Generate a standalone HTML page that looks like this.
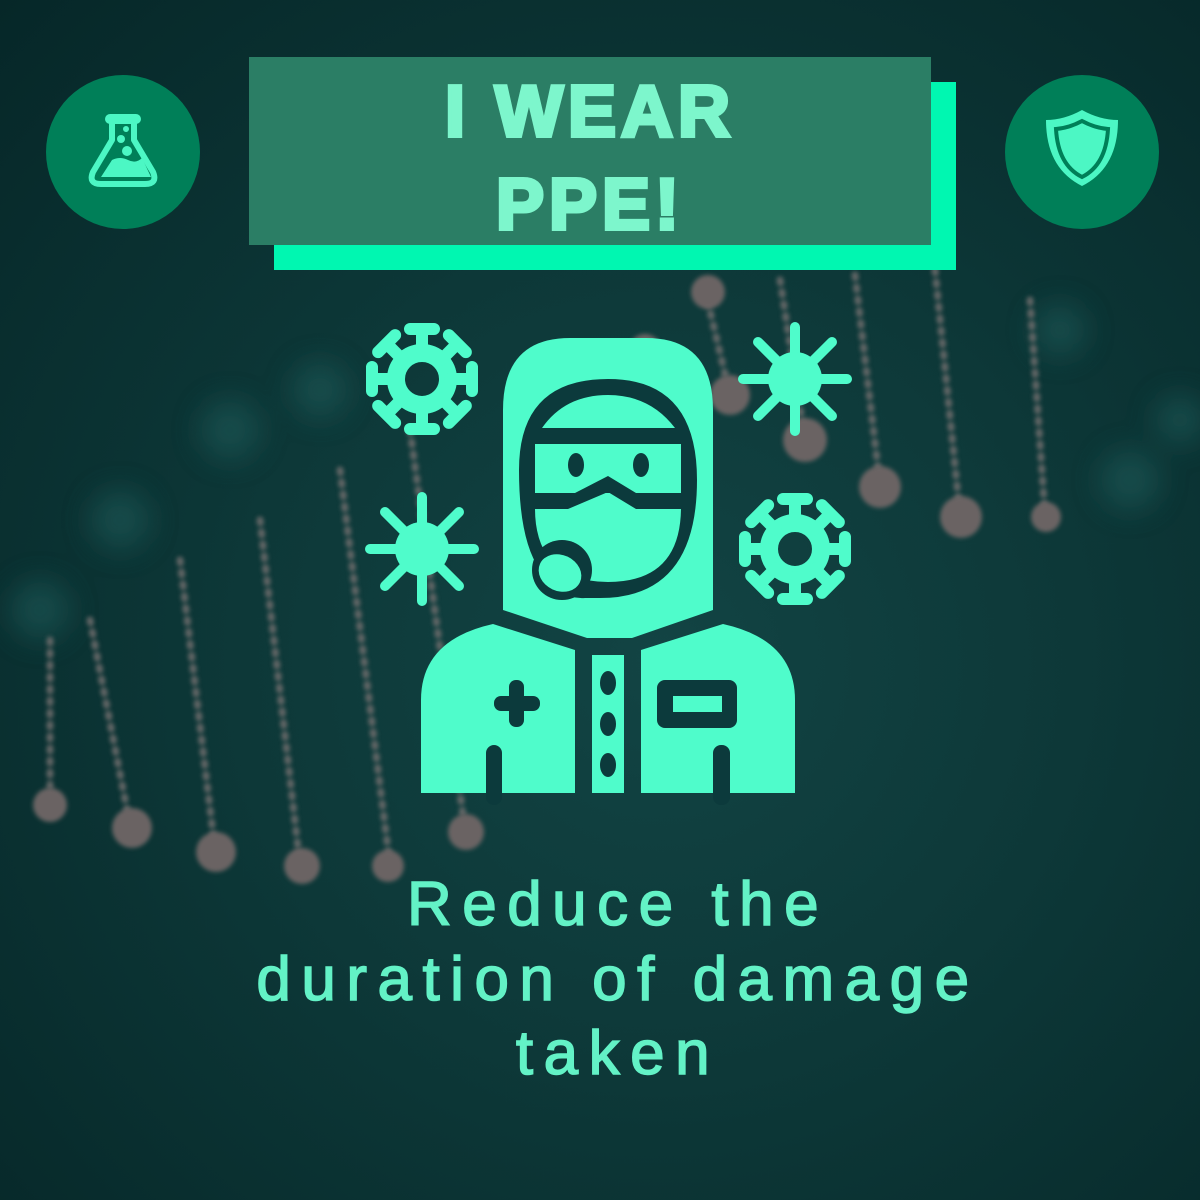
<!DOCTYPE html>
<html><head><style>
html,body{margin:0;padding:0}
body{width:1200px;height:1200px;overflow:hidden;position:relative;font-family:"Liberation Sans",sans-serif;
background:radial-gradient(ellipse at 55% 55%,#124444 0%,#0d3838 45%,#062728 100%);}
.abs{position:absolute}
.t{position:absolute;left:0;width:1236px;text-align:center;color:#63f2c6;font-size:62px;letter-spacing:10.5px;line-height:1;-webkit-text-stroke:1.5px #63f2c6}
</style></head><body>
<svg class="abs" style="left:0;top:0" width="1200" height="1200">
<defs><filter id="b"><feGaussianBlur stdDeviation="2"/></filter><filter id="b2"><feGaussianBlur stdDeviation="14"/></filter></defs>
<g filter="url(#b2)" fill="#1c5a58" opacity=".6">
<circle cx="40" cy="610" r="30"/><circle cx="120" cy="520" r="30"/><circle cx="230" cy="430" r="30"/><circle cx="320" cy="390" r="28"/><circle cx="1130" cy="480" r="30"/><circle cx="1060" cy="330" r="26"/><circle cx="1180" cy="420" r="25"/>
</g>
<g stroke="#6a6a6a" stroke-width="7" stroke-dasharray="3 9" stroke-linecap="round" fill="none" filter="url(#b)" opacity=".9">
<path d="M50 640 L50 800"/><path d="M90 620 L130 825"/><path d="M180 560 L215 850"/><path d="M260 520 L300 865"/><path d="M340 470 L390 865"/><path d="M410 430 L465 830"/>
<path d="M705 290 L730 395"/><path d="M780 280 L805 440"/><path d="M855 275 L880 485"/><path d="M935 270 L960 515"/><path d="M1030 300 L1045 515"/>
</g>
<g fill="#6a6464" filter="url(#b)">
<circle cx="50" cy="805" r="17"/><circle cx="132" cy="828" r="20"/><circle cx="216" cy="852" r="20"/><circle cx="302" cy="866" r="18"/><circle cx="388" cy="866" r="16"/><circle cx="466" cy="832" r="18"/>
<circle cx="708" cy="292" r="17"/><circle cx="730" cy="395" r="20"/><circle cx="805" cy="440" r="22"/><circle cx="880" cy="487" r="21"/><circle cx="961" cy="517" r="21"/><circle cx="1046" cy="517" r="15"/>
<circle cx="605" cy="432" r="20"/><circle cx="645" cy="350" r="16"/><circle cx="575" cy="515" r="20"/><circle cx="560" cy="600" r="20"/><circle cx="510" cy="770" r="12"/>
</g>
<circle cx="123" cy="152" r="77" fill="#007f58"/>
<circle cx="1082" cy="152" r="77" fill="#007f58"/>
<rect x="105" y="114" width="36" height="10" rx="5" fill="#4cf7c4"/>
<path d="M112 122 V140 L93 172 Q88 184 101 184 H145 Q158 184 153 172 L134 140 V122" fill="none" stroke="#4cf7c4" stroke-width="6" stroke-linejoin="round"/>
<path d="M101 177 L112 160 q8 -4 16 0 q8 4 14 -2 l9 19 z" fill="#4cf7c4"/>
<circle cx="126" cy="129" r="3" fill="#4cf7c4"/><circle cx="121" cy="139" r="4" fill="#4cf7c4"/><circle cx="127" cy="151" r="5" fill="#4cf7c4"/>
<path d="M1082 110 q-18 10 -36 10 q0 48 36 66 q36 -18 36 -66 q-18 0 -36 -10 z" fill="#4cf7c4"/>
<path d="M1082 121 q-13 7 -26 8 q2 36 26 48 q24 -12 26 -48 q-13 -1 -26 -8 z" fill="none" stroke="#007f58" stroke-width="4"/>
<rect x="274" y="82" width="682" height="188" fill="#00f7b1"/>
<rect x="249" y="57" width="682" height="188" fill="#2b7e65"/>
<g fill="#4ffccb">
<path d="M503 610 V410 Q503 338 570 338 H646 Q713 338 713 410 V610 L632 638 H587 Z"/>
<path d="M421 793 V700 Q421 640 493 624 L575 650 V793 Z"/>
<rect x="592" y="655" width="32" height="138"/>
<path d="M795 793 V700 Q795 640 723 624 L641 650 V793 Z"/>
</g>
<path d="M519 470 Q519 379 608 379 Q697 379 697 480 Q697 598 600 598 L585 598 Q560 600 540 570 Q519 540 519 470Z" fill="#0c3a3c"/>
<path d="M542 428 Q565 395 608 395 Q650 395 675 428 Z" fill="#4ffccb"/>
<rect x="535" y="444" width="146" height="49" fill="#4ffccb"/>
<path d="M535 509 H568 L608 492 L636 509 H681 Q680 582 608 582 Q570 582 550 560 Q535 540 535 509Z" fill="#4ffccb"/>
<path d="M575 493 L608 476 L636 493 Z" fill="#0c3a3c"/>
<ellipse cx="576" cy="465" rx="8" ry="12" fill="#0c3a3c"/><ellipse cx="641" cy="465" rx="8" ry="12" fill="#0c3a3c"/>
<circle cx="562" cy="570" r="30" fill="#0c3a3c"/>
<ellipse cx="560" cy="573" rx="22" ry="18" transform="rotate(25 560 573)" fill="#4ffccb"/>
<g fill="#0c3a3c">
<rect x="486" y="745" width="16" height="60" rx="8"/><rect x="713" y="745" width="17" height="60" rx="8"/>
<ellipse cx="608" cy="683" rx="8" ry="12"/><ellipse cx="608" cy="724" rx="8" ry="12"/><ellipse cx="608" cy="765" rx="8" ry="12"/>
<rect x="657" y="680" width="80" height="48" rx="8"/>
<rect x="509" y="680" width="15" height="47" rx="7"/><rect x="494" y="696" width="46" height="15" rx="7"/>
</g>
<rect x="673" y="696" width="49" height="16" fill="#4ffccb"/>
<g fill="none" stroke="#4ffccb" stroke-width="12" stroke-linecap="round">
<g transform="translate(422 379)"><circle r="26" stroke-width="18"/><g id="sp"><path d="M0 -28 V-50 M-12 -50 H12"/></g><use href="#sp" transform="rotate(45)"/><use href="#sp" transform="rotate(90)"/><use href="#sp" transform="rotate(135)"/><use href="#sp" transform="rotate(180)"/><use href="#sp" transform="rotate(225)"/><use href="#sp" transform="rotate(270)"/><use href="#sp" transform="rotate(315)"/></g>
<g transform="translate(795 549)"><circle r="26" stroke-width="18"/><use href="#sp"/><use href="#sp" transform="rotate(45)"/><use href="#sp" transform="rotate(90)"/><use href="#sp" transform="rotate(135)"/><use href="#sp" transform="rotate(180)"/><use href="#sp" transform="rotate(225)"/><use href="#sp" transform="rotate(270)"/><use href="#sp" transform="rotate(315)"/></g>
<g transform="translate(795 379)" stroke-width="10"><path id="st" d="M0 -52 V52 M-52 0 H52 M-37 -37 L37 37 M37 -37 L-37 37"/></g>
<g transform="translate(422 549)" stroke-width="10"><use href="#st"/></g>
</g>
<circle cx="795" cy="379" r="27" fill="#4ffccb"/><circle cx="422" cy="549" r="27" fill="#4ffccb"/>
</svg>
<div class="abs" style="left:249px;top:66px;width:682px;text-align:center;color:#7df6cc;font-weight:bold;font-size:72px;letter-spacing:5px;line-height:93px;-webkit-text-stroke:4px #7df6cc">I WEAR<br>PPE!</div>
<div class="t" style="top:874px">Reduce the</div>
<div class="t" style="top:949px">duration of damage</div>
<div class="t" style="top:1023px">taken</div>
</body></html>
